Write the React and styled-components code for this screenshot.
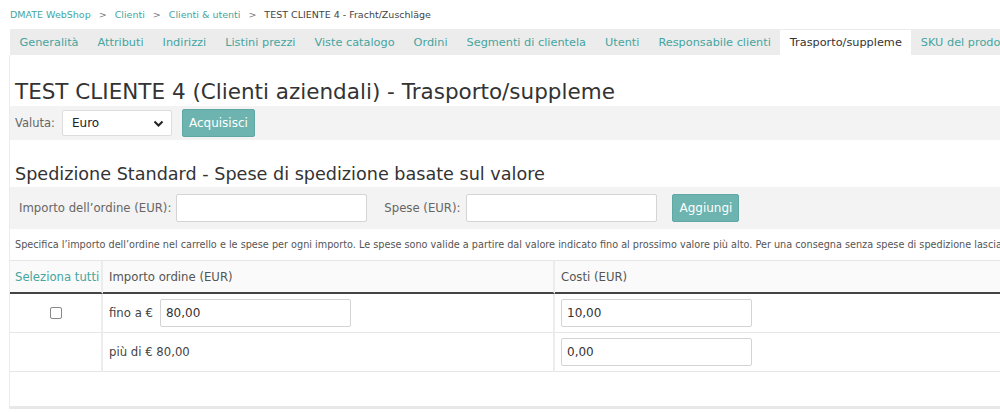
import React from 'react';
import styled, { createGlobalStyle } from 'styled-components';

const GlobalStyle = createGlobalStyle`
  html, body {
    margin: 0;
    padding: 0;
    background: #fff;
    overflow: hidden;
  }
  body {
    font-family: "DejaVu Sans", Verdana, sans-serif;
    color: #333;
  }
`;

const teal = '#45a5a0';

const Page = styled.div`
  width: 1000px;
  height: 412px;
  overflow: hidden;
`;

const Breadcrumb = styled.div`
  display: flex;
  align-items: center;
  gap: 8px;
  height: 29px;
  padding-left: 10px;
  font-size: 9.5px;
  white-space: nowrap;
`;

const Crumb = styled.span`
  color: ${(p) => (p.$current ? '#444' : teal)};
`;

const Sep = styled.span`
  color: #777;
`;

const TabBar = styled.div`
  display: flex;
  align-items: stretch;
  height: 26px;
  margin-left: 10px;
  background: #ececec;
  white-space: nowrap;
  overflow: hidden;
`;

const Tab = styled.div`
  display: flex;
  align-items: center;
  padding: 0 9.5px;
  margin-top: ${(p) => (p.$active ? '1px' : '0')};
  font-size: 11.3px;
  color: ${(p) => (p.$active ? '#333' : teal)};
  background: ${(p) => (p.$active ? '#fff' : 'transparent')};
`;

const Content = styled.div`
  margin-left: 9px;
  border-left: 1px solid #ececec;
`;

const Title = styled.h1`
  margin: 0;
  padding: 22px 0 0 5px;
  height: 29px;
  font-size: 21.5px;
  font-weight: normal;
  color: #333;
  white-space: nowrap;
  line-height: 29px;
`;

const Bar = styled.div`
  display: flex;
  align-items: center;
  height: ${(p) => p.$h};
  padding-left: ${(p) => p.$pl || '5px'};
  background: #f3f3f3;
  white-space: nowrap;
`;

const Label = styled.span`
  font-size: ${(p) => p.$fs || '11.7px'};
  color: #666;
  margin-right: ${(p) => p.$mr || '0'};
  margin-left: ${(p) => p.$ml || '0'};
`;

const Select = styled.div`
  position: relative;
  box-sizing: border-box;
  width: 110px;
  height: 26px;
  margin-right: 10px;
  padding-left: 9px;
  display: flex;
  align-items: center;
  background: #fff;
  border: 1px solid #ddd;
  border-radius: 2px;
  font-size: 12px;
  color: #222;
  svg {
    position: absolute;
    right: 7px;
    top: 9px;
  }
`;

const Button = styled.button`
  box-sizing: border-box;
  height: 28px;
  padding: 0 6px;
  margin-left: ${(p) => p.$ml || '0'};
  border: 1px solid #5fa8a4;
  border-radius: 2px;
  background: #6db3af;
  color: #fff;
  font-family: inherit;
  font-size: 12px;
`;

const TextInput = styled.div`
  box-sizing: border-box;
  width: ${(p) => p.$w || '191px'};
  height: 28px;
  padding-left: 5px;
  display: flex;
  align-items: center;
  background: #fff;
  border: 1px solid #d4d4d4;
  border-radius: 2px;
  font-size: 12px;
  color: #333;
`;

const SubTitle = styled.h2`
  margin: 0;
  padding: 21px 0 0 5px;
  height: 26px;
  line-height: 26px;
  font-size: 17.6px;
  font-weight: normal;
  color: #333;
  white-space: nowrap;
`;

const Help = styled.div`
  height: 31px;
  line-height: 31px;
  padding-left: 5px;
  font-size: 9.7px;
  color: #555;
  white-space: nowrap;
  overflow: hidden;
  border-bottom: 1px solid #e6e6e6;
`;

const Table = styled.div`
  display: grid;
  grid-template-columns: 93px 452px 1fr;
`;

const Head = styled.div`
  display: flex;
  align-items: center;
  height: 31px;
  padding-left: ${(p) => p.$pl || '6px'};
  background: #fafafa;
  border-bottom: 2px solid #444;
  border-right: ${(p) => (p.$last ? 'none' : '2px solid #ececec')};
  font-size: 11.7px;
  color: ${(p) => (p.$link ? teal : '#555')};
  white-space: nowrap;
`;

const Cell = styled.div`
  display: flex;
  align-items: center;
  justify-content: ${(p) => (p.$center ? 'center' : 'flex-start')};
  gap: 7px;
  height: 38px;
  padding-left: ${(p) => (p.$center ? '0' : '6px')};
  border-bottom: 1px solid #e6e6e6;
  border-right: ${(p) => (p.$last ? 'none' : '2px solid #ececec')};
  font-size: 11.7px;
  color: #444;
  white-space: nowrap;
`;

const Check = styled.span`
  box-sizing: border-box;
  width: 12px;
  height: 12px;
  border: 1px solid #888;
  border-radius: 2px;
  background: #fff;
`;

const EmptyRow = styled.div`
  height: 34px;
  border-bottom: 3px solid #e8e8e8;
`;

const Chevron = () => (
  <svg width="11" height="8" viewBox="0 0 11 8">
    <path d="M1.5 1.5 L5.5 5.5 L9.5 1.5" fill="none" stroke="#222" strokeWidth="2" />
  </svg>
);

const tabs = [
  'Generalità',
  'Attributi',
  'Indirizzi',
  'Listini prezzi',
  'Viste catalogo',
  'Ordini',
  'Segmenti di clientela',
  'Utenti',
  'Responsabile clienti',
  'Trasporto/suppleme',
  'SKU del prodotto',
];

const App = () => (
  <Page>
    <GlobalStyle />
    <Breadcrumb>
      <Crumb>DMATE WebShop</Crumb>
      <Sep>&gt;</Sep>
      <Crumb>Clienti</Crumb>
      <Sep>&gt;</Sep>
      <Crumb>Clienti &amp; utenti</Crumb>
      <Sep>&gt;</Sep>
      <Crumb $current>TEST CLIENTE 4 - Fracht/Zuschläge</Crumb>
    </Breadcrumb>
    <TabBar>
      {tabs.map((t) => (
        <Tab key={t} $active={t === 'Trasporto/suppleme'}>
          {t}
        </Tab>
      ))}
    </TabBar>
    <Content>
      <Title>TEST CLIENTE 4 (Clienti aziendali) - Trasporto/suppleme</Title>
      <Bar $h="34px">
        <Label $fs="11.5px" $mr="7px">Valuta:</Label>
        <Select>
          Euro
          <Chevron />
        </Select>
        <Button>Acquisisci</Button>
      </Bar>
      <SubTitle>Spedizione Standard - Spese di spedizione basate sul valore</SubTitle>
      <Bar $h="42px" $pl="9px">
        <Label $mr="5px">Importo dell’ordine (EUR):</Label>
        <TextInput />
        <Label $ml="17px" $mr="6px">Spese (EUR):</Label>
        <TextInput />
        <Button $ml="15px">Aggiungi</Button>
      </Bar>
      <Help>
        Specifica l’importo dell’ordine nel carrello e le spese per ogni importo. Le spese sono
        valide a partire dal valore indicato fino al prossimo valore più alto. Per una consegna
        senza spese di spedizione lasciare
      </Help>
      <Table>
        <Head $link $pl="5px">Seleziona tutti</Head>
        <Head>Importo ordine (EUR)</Head>
        <Head $last>Costi (EUR)</Head>

        <Cell $center>
          <Check />
        </Cell>
        <Cell>
          fino a €
          <TextInput>80,00</TextInput>
        </Cell>
        <Cell $last>
          <TextInput>10,00</TextInput>
        </Cell>

        <Cell $center />
        <Cell>più di € 80,00</Cell>
        <Cell $last>
          <TextInput>0,00</TextInput>
        </Cell>
      </Table>
      <EmptyRow />
    </Content>
  </Page>
);

export default App;
